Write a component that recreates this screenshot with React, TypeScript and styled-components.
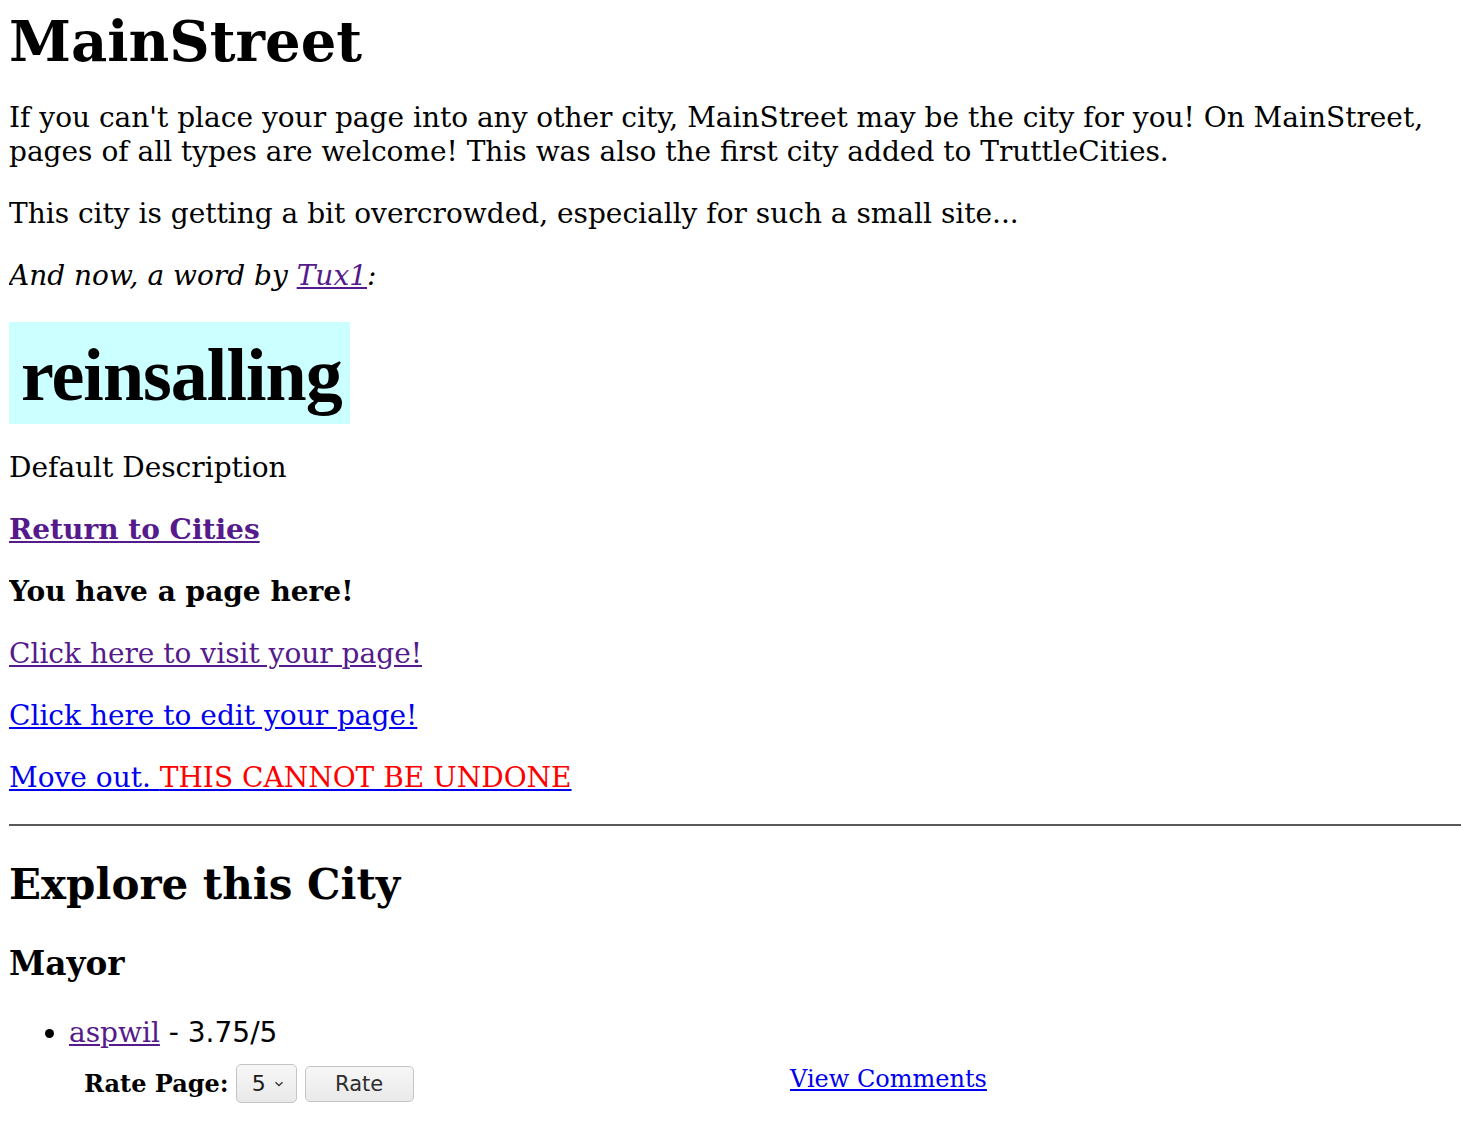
import React from "react";
import styled, { createGlobalStyle } from "styled-components";

const Global = createGlobalStyle`
  html, body { background: #ffffff; }
  body {
    margin: 8px 0 8px 9px;
    font-family: "DejaVu Serif", serif;
    font-size: 28px;
    line-height: 34px;
    color: #000000;
  }
`;

const Page = styled.main`
  display: block;
`;

const Title = styled.h1`
  font-size: 56px;
  font-weight: bold;
  margin: 0 0 -1px;
  line-height: normal;
`;

const Para = styled.p<{ $italic?: boolean; $bold?: boolean }>`
  margin: 28px 0;
  font-style: ${(p) => (p.$italic ? "italic" : "normal")};
  font-weight: ${(p) => (p.$bold ? "bold" : "normal")};
`;

const Link = styled.a<{ $visited?: boolean }>`
  color: ${(p) => (p.$visited ? "#551a8b" : "#0000ee")};
  text-decoration: underline;
  cursor: pointer;
`;

const CommentsLink = styled(Link)`
  align-self: start;
  margin-top: 1px;
`;

const Danger = styled.span`
  color: #ff0000;
`;

const BannerWrap = styled.div`
  margin: 29px 0 -1px;
  line-height: 0;
`;

const Banner = styled.div`
  display: inline-flex;
  align-items: flex-start;
  width: 341px;
  height: 102px;
  box-sizing: border-box;
  padding: 16px 0 0 12px;
  background: #ccffff;
  font-family: "Liberation Serif", "Times New Roman", serif;
  font-weight: bold;
  font-size: 74px;
  line-height: 1;
  letter-spacing: -1px;
  color: #000000;
`;

const Rule = styled.hr`
  border: none;
  border-top: 2px solid #595959;
  margin: 29px 0 0;
  height: 0;
`;

const Heading2 = styled.h2`
  font-size: 42px;
  line-height: normal;
  margin: 34px 0 35px;
`;

const Heading3 = styled.h3`
  font-size: 32.76px;
  line-height: normal;
  margin: 33px 0;
`;

const List = styled.ul`
  margin: 27px 0 0;
  padding-left: 60px;
`;

const Item = styled.li`
  list-style: disc;
`;

const Score = styled.span`
  font-family: "DejaVu Sans", sans-serif;
  font-size: 28px;
`;

const RateRow = styled.div`
  display: grid;
  grid-template-columns: 705px auto;
  align-items: center;
  justify-content: start;
  font-size: 24px;
  line-height: normal;
  padding: 14px 0 0 16px;
`;

const RateForm = styled.form`
  display: flex;
  align-items: center;
  gap: 8px;
  margin: 0;
`;

const RateLabel = styled.b`
  font-weight: bold;
  margin-left: -1px;
  margin-right: -1px;
`;

const Select = styled.div`
  display: inline-flex;
  align-items: center;
  gap: 8px;
  box-sizing: border-box;
  width: 61px;
  height: 39px;
  padding: 0 0 0 15px;
  border: 1px solid #c4c4c4;
  border-radius: 5px;
  background: linear-gradient(#f7f7f7, #e9e9e9);
  font-family: "DejaVu Sans", sans-serif;
  font-size: 22px;
  color: #1a1a1a;
`;

const Button = styled.button`
  box-sizing: border-box;
  width: 109px;
  height: 36px;
  border: 1px solid #c4c4c4;
  border-radius: 5px;
  background: linear-gradient(#f7f7f7, #e9e9e9);
  font-family: "DejaVu Sans", sans-serif;
  font-size: 21px;
  color: #2e2e2e;
  padding: 0;
`;

const Chevron = () => (
  <svg width="10" height="6" viewBox="0 0 10 6" aria-hidden="true">
    <path d="M1.5 1.2 L5 4.6 L8.5 1.2" fill="none" stroke="#3a3a3a" strokeWidth="1.4" />
  </svg>
);

export default function App() {
  return (
    <Page>
      <Global />
      <Title>MainStreet</Title>
      <Para>
        If you can't place your page into any other city, MainStreet may be the city for you! On MainStreet,
        pages of all types are welcome! This was also the first city added to TruttleCities.
      </Para>
      <Para>This city is getting a bit overcrowded, especially for such a small site...</Para>
      <Para $italic>
        And now, a word by <Link $visited>Tux1</Link>:
      </Para>
      <BannerWrap>
        <Banner>reinsalling</Banner>
      </BannerWrap>
      <Para>Default Description</Para>
      <Para $bold>
        <Link $visited>Return to Cities</Link>
      </Para>
      <Para $bold>You have a page here!</Para>
      <Para>
        <Link $visited>Click here to visit your page!</Link>
      </Para>
      <Para>
        <Link>Click here to edit your page!</Link>
      </Para>
      <Para>
        <Link>
          Move out. <Danger>THIS CANNOT BE UNDONE</Danger>
        </Link>
      </Para>
      <Rule />
      <Heading2>Explore this City</Heading2>
      <Heading3>Mayor</Heading3>
      <List>
        <Item>
          <Link $visited>aspwil</Link> <Score>- 3.75/5</Score>
          <RateRow>
            <RateForm>
              <RateLabel>Rate Page:</RateLabel>
              <Select>
                5 <Chevron />
              </Select>
              <Button type="button">Rate</Button>
            </RateForm>
            <CommentsLink>View Comments</CommentsLink>
          </RateRow>
        </Item>
      </List>
    </Page>
  );
}
